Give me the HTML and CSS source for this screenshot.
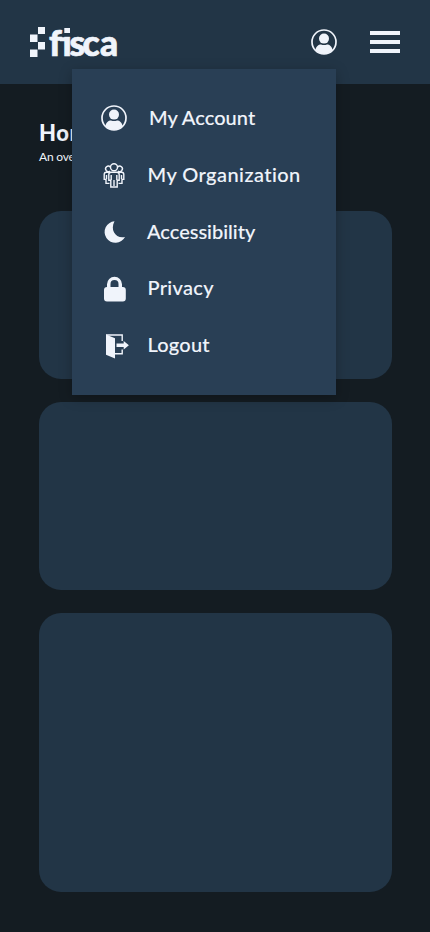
FILE: index.html
```html
<!DOCTYPE html>
<html lang="en">
<head>
<meta charset="utf-8">
<meta name="viewport" content="width=device-width, initial-scale=1">
<title>fisca</title>
<link rel="stylesheet" href="styles.css">
</head>
<body>
<header class="topbar">
  <svg class="logo" width="92" height="36" viewBox="0 0 92 36" role="img" aria-label="fisca">
    <path d="M8 2h7v7H8zM0 9.500h7.500V17H0zM8 17h7v7.500H8zM0 24.500h7.500V32H0z"/>
    <text class="wordmark" x="19 32.500 39.500 52.500 70" y="31">fisca</text>
    <path class="dot-gap" d="M33 1h9v10.300h-9z"/>
    <path d="M34.300 3h5.700v5h-5.700zM30 12.300h6v4h-6z"/>
  </svg>
  <nav class="actions">
    <svg width="28" height="28" viewBox="0 0 28 28"><use href="#user"/></svg>
    <svg class="burger" width="30" height="24" viewBox="0 0 30 24"><path d="M0 1h30v4H0zM0 10h30v4H0zM0 19h30v4H0z"/></svg>
  </nav>
  <ul class="menu">
    <li><svg viewBox="0 0 28 28"><g id="user"><circle class="line" cx="14" cy="14" r="12"/><circle cx="14" cy="10.600" r="5"/><path d="M5.300 22.300C6 18.300 8.500 16.400 11 16.400c2 .9 4 .9 6 0 2.500 0 5 1.900 5.700 5.900-4.700 4.900-12.700 4.900-17.400 0z"/></g></svg><span class="account">My Account</span></li>
    <li><svg viewBox="0 0 28 28"><g class="thin"><circle cx="14" cy="6.200" r="3.500"/><path d="M10.300 6a2.700 2.700 0 1 0-.3 4M17.700 6a2.700 2.700 0 1 1 .3 4M9 11.200H6.200c-1.500 0-2 1-2 2.200v5H6v4h3.500M19 11.200h2.800c1.500 0 2 1 2 2.200v5H22v4h-3.500M11 11.200h6c1.600 0 2.200 1 2.200 2.300v5.700h-2V26h-6.400v-6.800h-2v-5.700c0-1.300.6-2.300 2.200-2.300zM11.200 14v5M16.800 14v5M14 19v6M6.500 14v4M21.500 14v4"/></g></svg><span class="organization">My Organization</span></li>
    <li><svg viewBox="0 0 28 28"><path d="M14.500 3.300A10.800 10.800 0 1 0 25 19C16 21 9.700 12.500 14.500 3.300z"/></svg><span class="accessibility">Accessibility</span></li>
    <li><svg viewBox="0 0 28 28"><path fill-rule="evenodd" d="M7 12V9.200a7.500 7.500 0 0 1 15 0V12h.8q3 0 3 3v8.500q0 3-3 3H7q-3 0-3-3V15q0-3 3-3zm3.500 0h8V9a4 4 0 0 0-8 0z"/></svg><span class="privacy">Privacy</span></li>
    <li><svg viewBox="0 0 28 28"><path d="M6 2.500l9 3.700v20.300l-9-3.800zM16.500 11.400h7.200V9l5.200 4.200-5.200 4.200v-2.500h-7.200z"/><path class="thin" d="M6 3h16.200v6M22.200 17.500v4.300H15"/></svg><span class="logout">Logout</span></li>
  </ul>
</header>
<main>
  <h1>Home</h1>
  <p>An overview</p>
  <section class="card first"></section>
  <section class="card second"></section>
  <section class="card third"></section>
</main>
</body>
</html>
```
FILE: styles.css
```css
* { box-sizing: border-box; }
body {
  margin: 0;
  min-height: 932px;
  background: #141c22;
  color: #f0f4fb;
  font-family: Lato, "Open Sans", sans-serif;
}
svg { display: block; fill: #f0f4fb; overflow: visible; }
.topbar {
  position: relative;
  display: flex;
  justify-content: space-between;
  height: 84px;
  padding: 25px 29.700px 0 30px;
  background: #223546;
}
.wordmark {
  font: 900 35.500px Lato, sans-serif;
  font-variant-ligatures: none;
  stroke: #f0f4fb;
  stroke-width: .7px;
}
.dot-gap { fill: #223546; }
.actions { display: flex; gap: 32.500px; padding-top: 3px; }
.burger { margin-top: 2px; }
.line { fill: none; stroke: #f0f4fb; stroke-width: 1.700px; }
.thin { fill: none; stroke: #f0f4fb; stroke-width: 1.400px; }
.menu {
  position: absolute;
  left: 72px;
  top: 69px;
  width: 264px;
  height: 326px;
  margin: 0;
  padding: 21px 0 0 28px;
  list-style: none;
  background: #293f55;
  box-shadow: 0 3px 12px rgba(0, 0, 0, .25);
}
.menu li { display: flex; align-items: center; height: 56.800px; }
.menu svg { flex: none; width: 28px; height: 28px; }
.menu span {
  margin-left: 19.500px;
  padding-bottom: 2.500px;
  font-size: 20px;
  font-weight: 500;
  line-height: 28px;
  white-space: nowrap;
  -webkit-text-stroke: .1px #f0f4fb;
}
.menu .account { margin-left: 21px; letter-spacing: .05px; }
.menu .organization { letter-spacing: .45px; }
.menu .accessibility { margin-left: 19px; }
.menu .privacy { padding-bottom: 4px; letter-spacing: .3px; }
.menu .logout { letter-spacing: .2px; }
main { padding: 35px 38px 40px 39px; }
h1 { margin: 0; font-size: 22px; line-height: 28px; font-weight: 900; letter-spacing: .6px; }
p { margin: 2px 0 46px; font-size: 12px; line-height: 16px; letter-spacing: -.2px; }
.card { border-radius: 22px; background: #223546; margin-bottom: 23px; }
.first { height: 168px; }
.second { height: 188px; }
.third { height: 279px; margin-bottom: 0; }
```
